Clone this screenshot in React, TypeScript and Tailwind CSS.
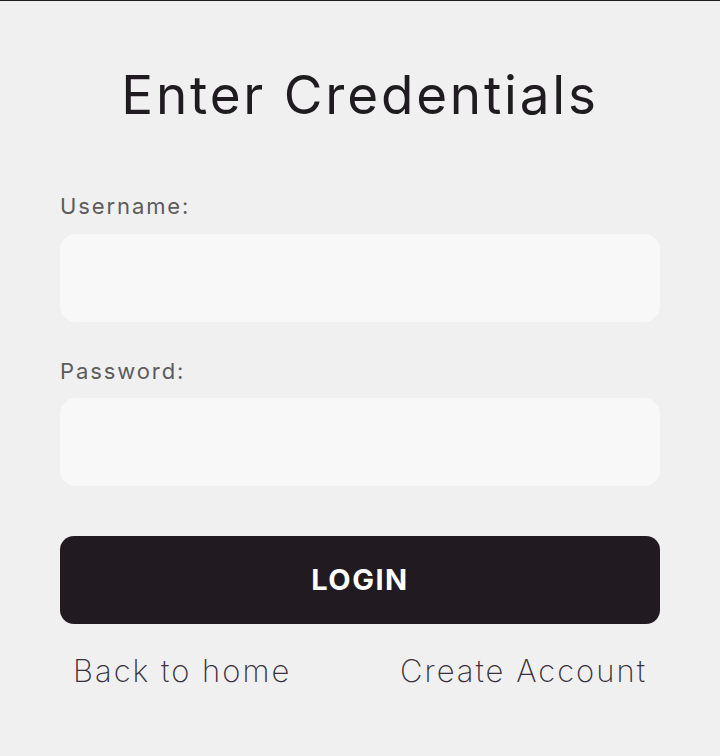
export default function App() {
  return (
    <div
      className="min-h-[756px] w-full border-t border-[#201b21] bg-[#f0f0f0] text-[#201b21]"
      style={{ fontFamily: "Inter, 'Noto Sans', sans-serif" }}
    >
      <div className="flex flex-col px-[60px] pt-[62px] pb-[60px]">
        <h1 className="text-center text-[53px] font-normal leading-[64px] tracking-[2.8px] text-[#201b21]">
          Enter Credentials
        </h1>
        <label className="mt-[64px] block text-[22px] leading-[30px] tracking-[1.9px] text-[#5c5c5c]">
          Username:
        </label>
        <input
          type="text"
          className="mt-[13px] h-[88px] w-full rounded-[16px] bg-[#f8f8f8] px-5 text-[22px] outline-none"
        />
        <label className="mt-[34px] block text-[22px] leading-[30px] tracking-[1.9px] text-[#5c5c5c]">
          Password:
        </label>
        <input
          type="password"
          className="mt-[12px] h-[88px] w-full rounded-[16px] bg-[#f8f8f8] px-5 text-[22px] outline-none"
        />
        <button className="mt-[50px] flex h-[88px] w-full items-center justify-center rounded-[14px] bg-[#211b21] text-[29px] font-bold tracking-[1.5px] text-white">
          LOGIN
        </button>
        <div className="mt-[25px] flex items-center justify-between px-[13px]">
          <a className="text-[31px] font-extralight leading-[44px] tracking-[2px] text-[#3a3140]">Back to home</a>
          <a className="text-[31px] font-extralight leading-[44px] tracking-[2px] text-[#3a3140]">Create Account</a>
        </div>
      </div>
    </div>
  );
}
